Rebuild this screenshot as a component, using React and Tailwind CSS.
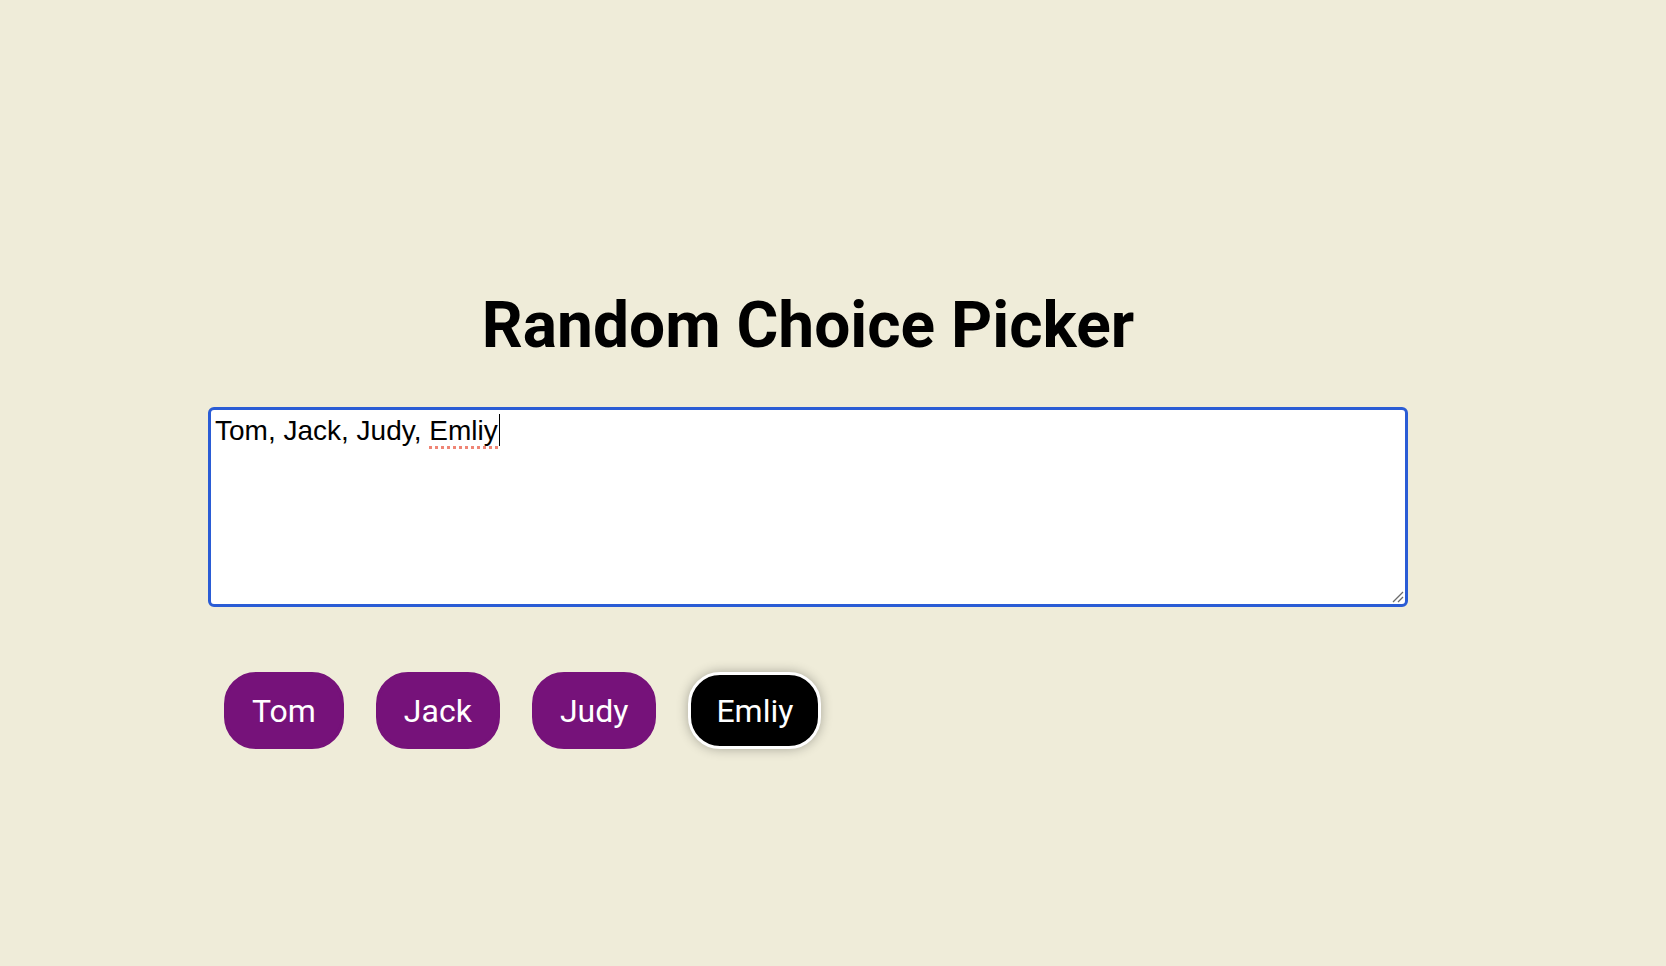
import React from "react";

const choices = ["Tom", "Jack", "Judy", "Emliy"];

export default function App() {
  const picked = "Emliy";

  return (
    <div className="min-h-screen w-full bg-[#efecd9] pt-[294px]">
      <div className="ml-[208px] w-[1200px]">
        {/* Title */}
        <h1 className="text-center font-['Roboto',sans-serif] text-[64px] font-bold leading-[64px] text-black">
          Random Choice Picker
        </h1>

        {/* Fake focused textarea */}
        <div className="relative mt-[49px] h-[200px] w-[1200px] rounded-[6px] border-[3px] border-[#2a5cd5] bg-white pl-[4px]">
          <p className="-mt-[2px] font-['Liberation_Sans',Arial,sans-serif] text-[28px] leading-[1.15] text-black">
            Tom, Jack, Judy,{" "}
            <span className="relative">
              Emliy
              <span className="absolute -bottom-[3px] left-0 right-0 border-b-[3px] border-dotted border-[#ef8575]" />
            </span>
            <span className="ml-[1px] inline-block h-[32px] w-[1.5px] translate-y-[6px] bg-black" />
          </p>
          {/* resize grip */}
          <svg
            className="absolute bottom-[1px] right-[1px]"
            width="14"
            height="14"
            viewBox="0 0 14 14"
          >
            <path d="M3 13 L13 3 M8 13 L13 8" stroke="#6b6b6b" strokeWidth="1.3" fill="none" />
          </svg>
        </div>

        {/* Choice tags */}
        <div className="mt-[65px] flex gap-[32px] pl-[16px]">
          {choices.map((c) => (
            <span
              key={c}
              className={
                c === picked
                  ? "flex h-[77px] items-center rounded-[32px] border-[3px] border-white bg-black px-[25px] font-['Roboto',sans-serif] text-[32px] text-white shadow-[0_0_12px_rgba(0,0,0,0.3)]"
                  : "flex h-[77px] items-center rounded-[32px] border-[3px] border-[#76127a] bg-[#76127a] px-[25px] font-['Roboto',sans-serif] text-[32px] text-white"
              }
            >
              {c}
            </span>
          ))}
        </div>
      </div>
    </div>
  );
}
